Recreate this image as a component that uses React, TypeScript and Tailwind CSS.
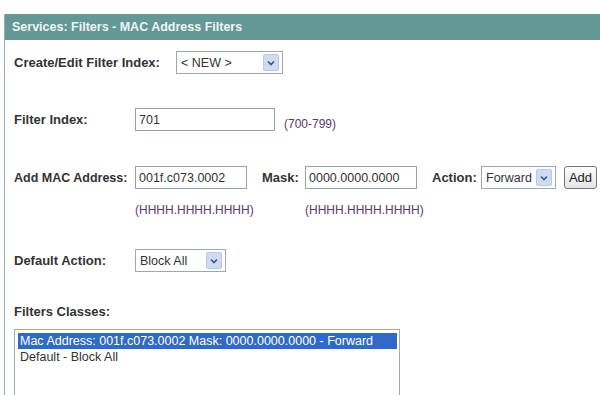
import type { ReactNode } from 'react';

const font = { fontFamily: '"Liberation Sans", Arial, sans-serif' };

function Chevron() {
  return (
    <span className="flex h-[17px] w-[16px] items-center justify-center rounded-[2px] border border-[#b7c9e6] bg-[#cddcf2]">
      <svg width="8" height="6" viewBox="0 0 8 6">
        <path d="M1 1.5 L4 4.5 L7 1.5" fill="none" stroke="#3d5580" strokeWidth="1.6" />
      </svg>
    </span>
  );
}

function Select({ value, width }: { value: string; width: string }) {
  return (
    <div className={`flex h-[23px] items-center justify-between border border-[#9aa9b8] bg-white pl-[4px] pr-[3px] text-[12.5px] leading-[18px] text-[#333] ${width}`}>
      <span>{value}</span>
      <Chevron />
    </div>
  );
}

function Input({ value, width }: { value: string; width: string }) {
  return (
    <div className={`flex h-[23px] items-center border border-[#8fa3b3] bg-white pl-[3px] text-[12.5px] leading-[18px] text-[#333] ${width}`}>
      {value}
    </div>
  );
}

function Label({ children, width, size = 'text-[13px]' }: { children: ReactNode; width: string; size?: string }) {
  return <span className={`shrink-0 leading-[18px] font-bold text-[#333] ${size} ${width}`}>{children}</span>;
}

export default function App() {
  return (
    <div className="h-[395px] w-[600px] overflow-hidden bg-white" style={font}>
      <div className="ml-[4px] mt-[14px] h-[381px] border-l border-[#8fb0ae]">
        {/* Title bar */}
        <div className="flex h-[26px] items-center bg-[#639896] pl-[7px] text-[12.5px] font-bold text-[#eef5f4]">
          Services: Filters - MAC Address Filters
        </div>

        <div className="pl-[9px]">
          {/* Create/Edit */}
          <div className="mt-[11px] flex items-center">
            <Label width="w-[162px]">Create/Edit Filter Index:</Label>
            <Select value="< NEW >" width="w-[107px]" />
          </div>

          {/* Filter index */}
          <div className="mt-[34px] flex items-center">
            <Label width="w-[121px]">Filter Index:</Label>
            <Input value="701" width="w-[140px]" />
            <span className="relative top-[4px] ml-[9px] text-[12px] leading-[18px] text-[#5b3a6a]">(700-799)</span>
          </div>

          {/* Add MAC */}
          <div className="mt-[35px] flex items-center">
            <Label width="w-[121px]" size="text-[12.5px]">Add MAC Address:</Label>
            <Input value="001f.c073.0002" width="w-[112px]" />
            <Label width="ml-[15px] w-[43px]">Mask:</Label>
            <Input value="0000.0000.0000" width="w-[112px]" />
            <Label width="ml-[15px] w-[49px]">Action:</Label>
            <Select value="Forward" width="w-[75px]" />
            <button className="ml-[8px] flex h-[23px] w-[33px] items-center justify-center rounded-[3px] border border-[#6f7780] bg-gradient-to-b from-[#fdfdfd] to-[#e4e4e4] text-[13px] text-[#222]">
              Add
            </button>
          </div>

          {/* Hints */}
          <div className="mt-[12px] flex pl-[121px] text-[12px] leading-[18px] text-[#5b3a6a]">
            <span className="w-[170px]">(HHHH.HHHH.HHHH)</span>
            <span>(HHHH.HHHH.HHHH)</span>
          </div>

          {/* Default action */}
          <div className="mt-[30px] flex items-center">
            <Label width="w-[121px]">Default Action:</Label>
            <Select value="Block All" width="w-[91px]" />
          </div>

          {/* Filter classes */}
          <div className="mt-[31px] flex">
            <Label width="">Filters Classes:</Label>
          </div>
          <div className="mt-[8px] h-[80px] w-[386px] border border-b-0 border-[#a9a9a9] bg-white p-[3px] pr-[2px] text-[12.5px] text-[#333]">
            <div className="flex h-[16px] items-center bg-[#3169c6] pl-[2px] text-white">
              Mac Address: 001f.c073.0002 Mask: 0000.0000.0000 - Forward
            </div>
            <div className="flex h-[16px] items-center pl-[2px]">Default - Block All</div>
          </div>
        </div>
      </div>
    </div>
  );
}
